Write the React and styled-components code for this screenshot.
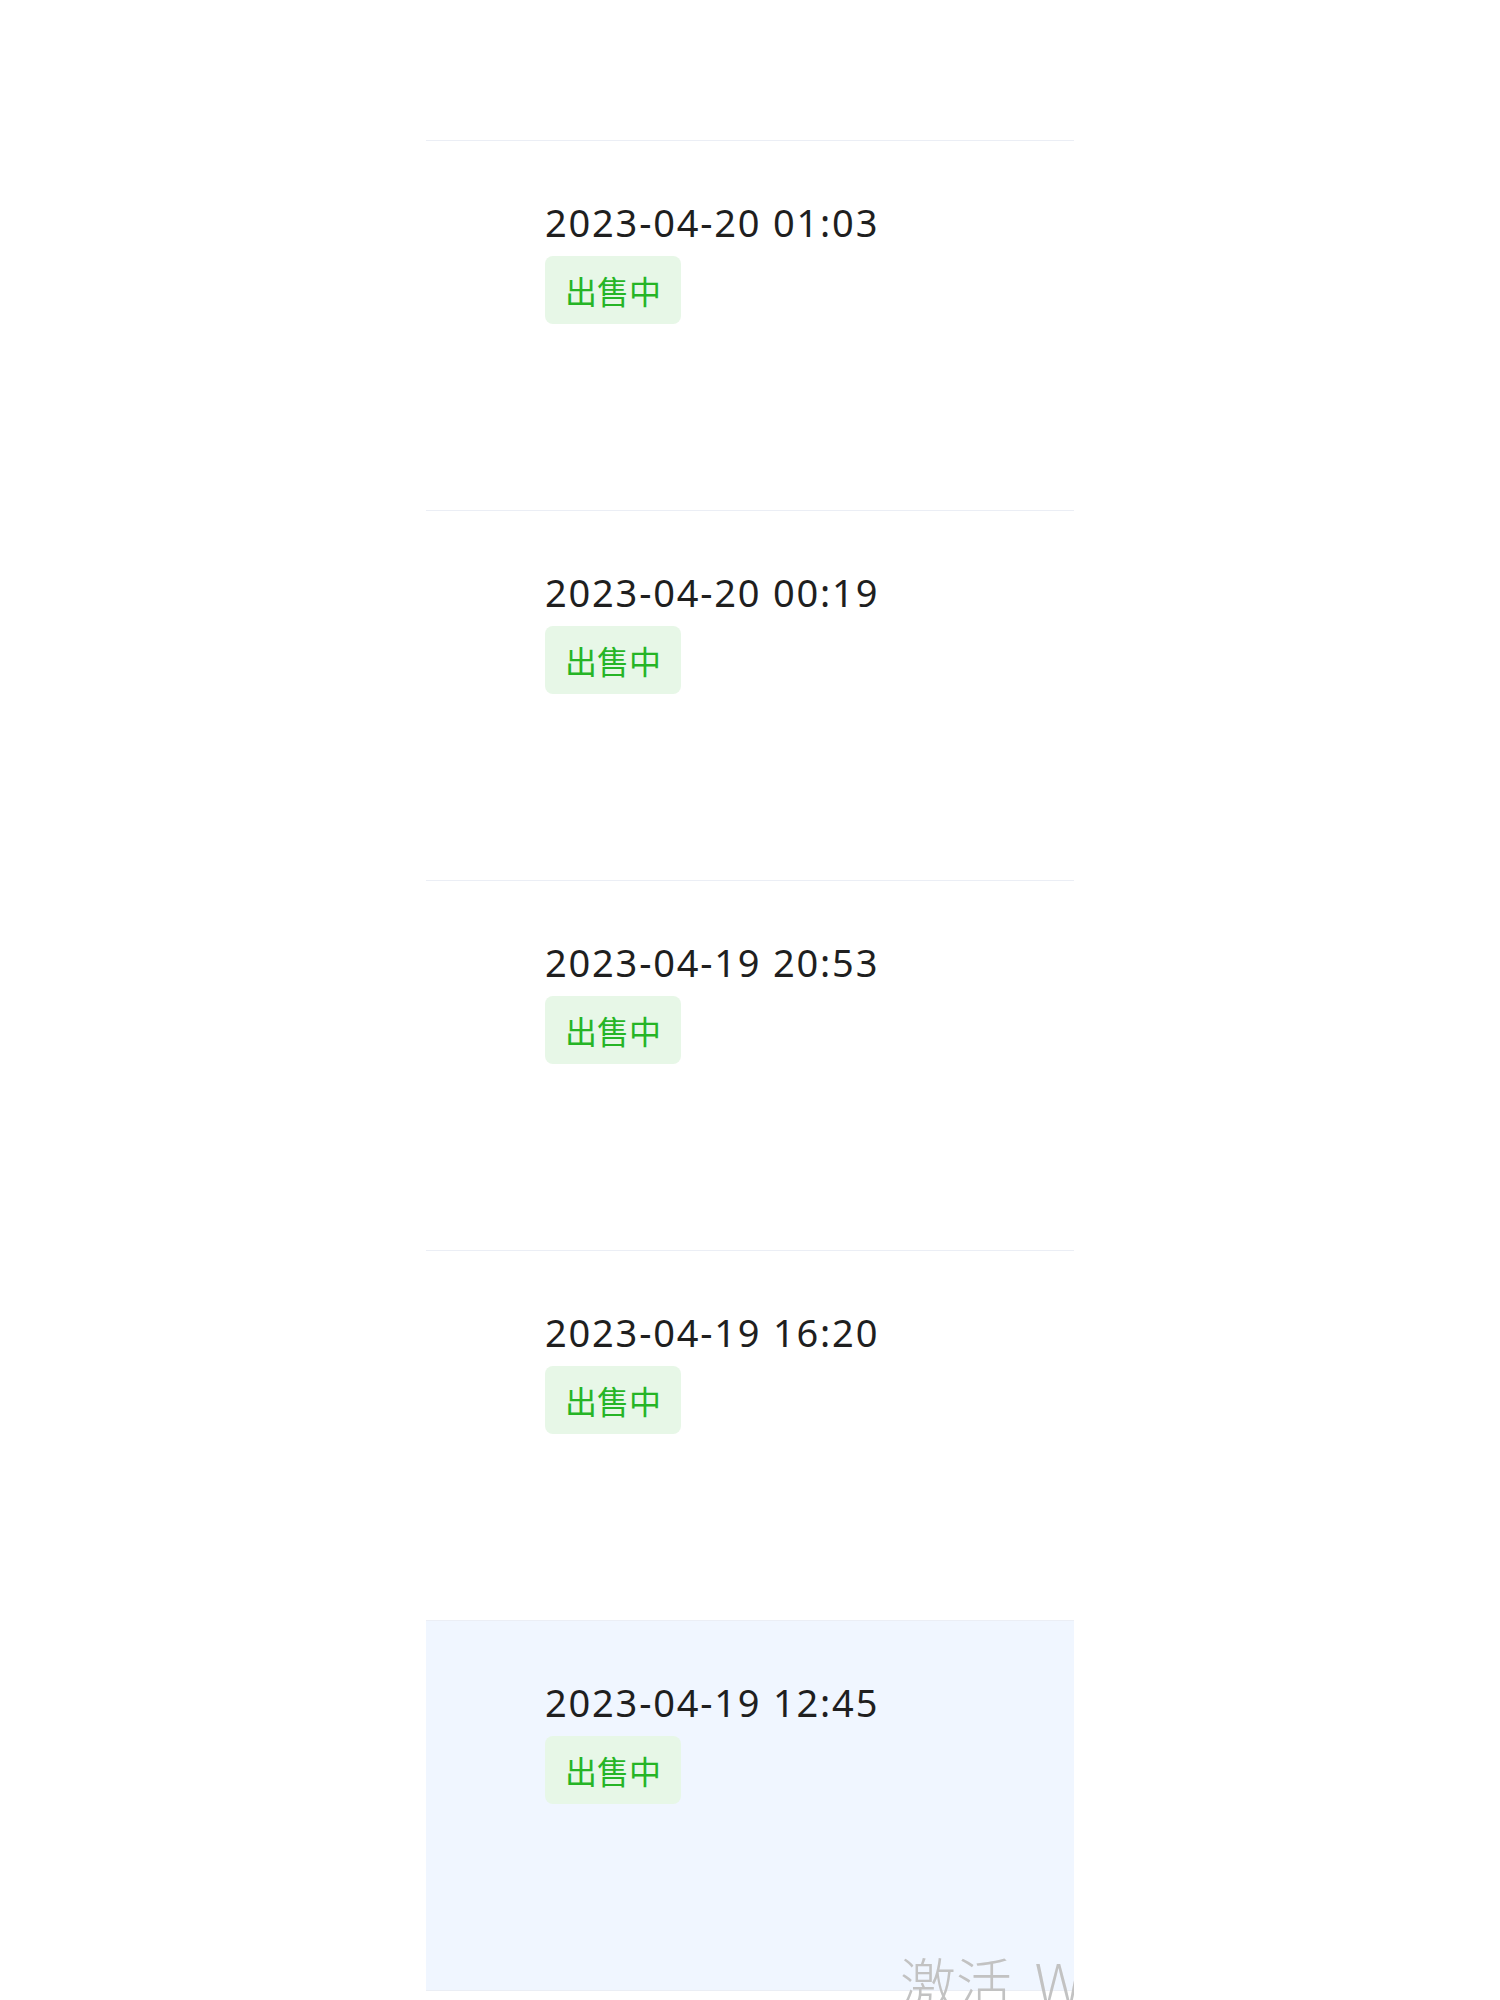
import styled, { createGlobalStyle } from "styled-components";

const GlobalStyle = createGlobalStyle`
    body {
        margin: 0;
        background: #ffffff;
        font-family: "Noto Sans", "Noto Sans CJK SC", sans-serif;
    }
`

const records = [
    { time: "2023-04-20 01:03", status: "出售中" },
    { time: "2023-04-20 00:19", status: "出售中" },
    { time: "2023-04-19 20:53", status: "出售中" },
    { time: "2023-04-19 16:20", status: "出售中" },
    { time: "2023-04-19 12:45", status: "出售中", current: true },
];

export default function App() {
    return (
        <Page>
            <GlobalStyle />
            <Column>
                <TopGap />
                {records.map((r) => (
                    <Row key={r.time} $current={r.current}>
                        <Time>{r.time}</Time>
                        <Tag>{r.status}</Tag>
                    </Row>
                ))}
                {/* windows activation overlay, cut by the column edge like in the shot */}
                <Watermark>激活 Windows</Watermark>
            </Column>
        </Page>
    )
}

const Page = styled.div`
    width: 1500px;
    height: 2000px;
    overflow: hidden;
    padding-left: 426px;
    box-sizing: border-box;
`

const Column = styled.div`
    position: relative;
    width: 648px;
    height: 2000px;
    overflow: hidden;
`

const TopGap = styled.div`
    height: 141px;
    box-sizing: border-box;
    border-bottom: 1px solid #ebeef5;
`

const Row = styled.div`
    height: 370px;
    box-sizing: border-box;
    border-bottom: 1px solid #ebeef5;
    background: ${(p) => (p.$current ? "#f0f6ff" : "#ffffff")};
    padding: 62px 0 0 119px;
    display: flex;
    flex-direction: column;
    align-items: flex-start;
`

const Time = styled.div`
    font-family: "Noto Sans", sans-serif;
    font-size: 38px;
    line-height: 38px;
    letter-spacing: 1.8px;
    color: #1f1f1f;
`

const Tag = styled.span`
    margin-top: 15px;
    height: 68px;
    padding: 0 20px;
    display: inline-flex;
    align-items: center;
    background: #e7f7e7;
    border-radius: 8px;
    color: #26b526;
    font-family: "Noto Sans CJK SC", sans-serif;
    font-size: 32px;
    line-height: 1;
`

const Watermark = styled.div`
    position: absolute;
    left: 474px;
    top: 1953px;
    white-space: nowrap;
    font-family: "Noto Sans CJK SC", sans-serif;
    font-size: 56px;
    font-weight: 300;
    word-spacing: 10px;
    line-height: 1;
    color: #c2c2c2;
`
